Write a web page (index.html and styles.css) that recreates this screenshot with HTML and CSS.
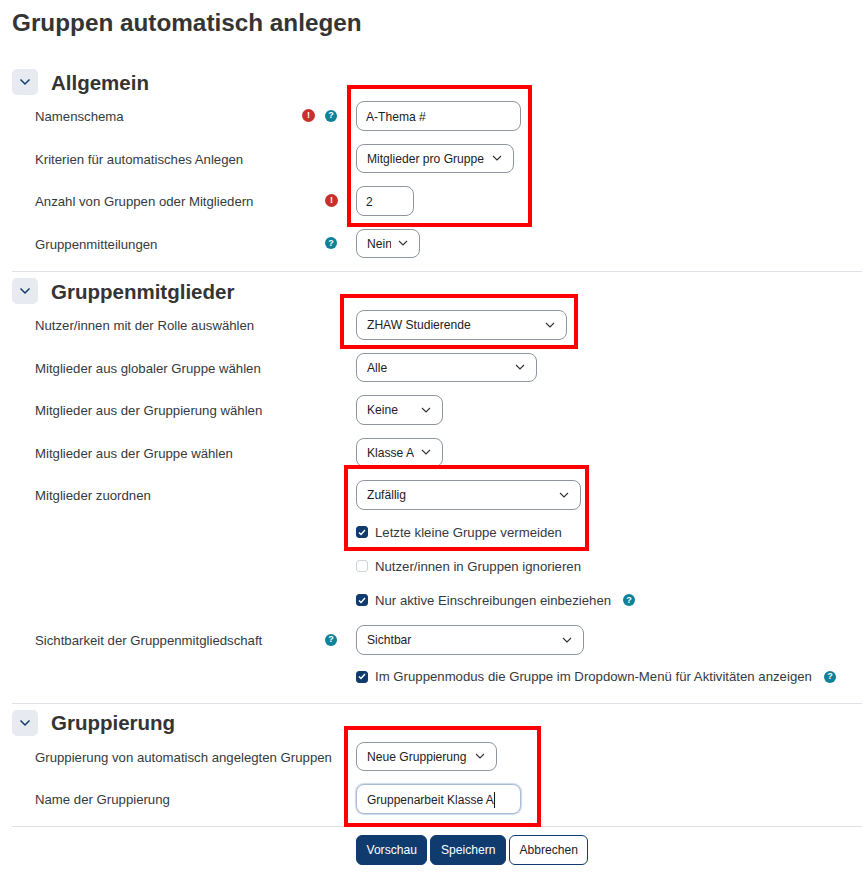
FILE: index.html
```html
<!DOCTYPE html>
<html lang="de">
<head>
    <meta charset="UTF-8">
    <title>Gruppen automatisch anlegen</title>
    <link rel="stylesheet" href="styles.css">
</head>
<body>
    <div id="page">
        <h1>Gruppen automatisch anlegen</h1>
        <form action="" method="post">

            <!-- Allgemein -->
            <section class="group first">
                <div class="group-head">
                    <span class="toggle"><svg width="12" height="8" viewBox="0 0 12 8"><path d="M1.5 1.5 6 6l4.500-4.500"/></svg></span>
                    <h2>Allgemein</h2>
                </div>
                <div class="row">
                    <div class="cell">
                        <label>Namenschema</label>
                        <span class="icon err">!</span>
                        <span class="icon help">?</span>
                    </div>
                    <input type="text" class="w-165" value="A-Thema #">
                </div>
                <div class="row">
                    <div class="cell"><label>Kriterien für automatisches Anlegen</label></div>
                    <select class="w-158"><option>Mitglieder pro Gruppe</option></select>
                </div>
                <div class="row">
                    <div class="cell">
                        <label>Anzahl von Gruppen oder Mitgliedern</label>
                        <span class="icon err solo">!</span>
                    </div>
                    <input type="text" class="w-58" value="2">
                </div>
                <div class="row">
                    <div class="cell">
                        <label>Gruppenmitteilungen</label>
                        <span class="icon help">?</span>
                    </div>
                    <select class="w-64"><option>Nein</option></select>
                </div>
            </section>

            <!-- Gruppenmitglieder -->
            <section class="group">
                <div class="group-head">
                    <span class="toggle"><svg width="12" height="8" viewBox="0 0 12 8"><path d="M1.5 1.5 6 6l4.500-4.500"/></svg></span>
                    <h2>Gruppenmitglieder</h2>
                </div>
                <div class="row">
                    <div class="cell"><label>Nutzer/innen mit der Rolle auswählen</label></div>
                    <select class="w-211"><option>ZHAW Studierende</option></select>
                </div>
                <div class="row">
                    <div class="cell"><label>Mitglieder aus globaler Gruppe wählen</label></div>
                    <select class="w-181"><option>Alle</option></select>
                </div>
                <div class="row">
                    <div class="cell"><label>Mitglieder aus der Gruppierung wählen</label></div>
                    <select class="w-87"><option>Keine</option></select>
                </div>
                <div class="row">
                    <div class="cell"><label>Mitglieder aus der Gruppe wählen</label></div>
                    <select class="w-87"><option>Klasse A</option></select>
                </div>
                <div class="row after-select">
                    <div class="cell"><label>Mitglieder zuordnen</label></div>
                    <select class="w-225"><option>Zufällig</option></select>
                </div>
                <div class="check-row">
                    <span class="box on"><svg width="8" height="7" viewBox="0 0 8 7"><path d="M1 3.500 3 5.500 7 1"/></svg></span>
                    <span>Letzte kleine Gruppe vermeiden</span>
                </div>
                <div class="check-row">
                    <span class="box"></span>
                    <span>Nutzer/innen in Gruppen ignorieren</span>
                </div>
                <div class="check-row">
                    <span class="box on"><svg width="8" height="7" viewBox="0 0 8 7"><path d="M1 3.500 3 5.500 7 1"/></svg></span>
                    <span>Nur aktive Einschreibungen einbeziehen</span>
                    <span class="icon help after">?</span>
                </div>
                <div class="row">
                    <div class="cell">
                        <label>Sichtbarkeit der Gruppenmitgliedschaft</label>
                        <span class="icon help">?</span>
                    </div>
                    <select class="w-228"><option>Sichtbar</option></select>
                </div>
                <div class="check-row tail">
                    <span class="box on"><svg width="8" height="7" viewBox="0 0 8 7"><path d="M1 3.500 3 5.500 7 1"/></svg></span>
                    <span>Im Gruppenmodus die Gruppe im Dropdown-Menü für Aktivitäten anzeigen</span>
                    <span class="icon help after">?</span>
                </div>
            </section>

            <!-- Gruppierung -->
            <section class="group">
                <div class="group-head">
                    <span class="toggle"><svg width="12" height="8" viewBox="0 0 12 8"><path d="M1.5 1.5 6 6l4.500-4.500"/></svg></span>
                    <h2>Gruppierung</h2>
                </div>
                <div class="row">
                    <div class="cell"><label>Gruppierung von automatisch angelegten Gruppen</label></div>
                    <select class="w-141"><option>Neue Gruppierung</option></select>
                </div>
                <div class="row last">
                    <div class="cell"><label>Name der Gruppierung</label></div>
                    <div class="focus-input">Gruppenarbeit Klasse A<span class="caret"></span></div>
                </div>
            </section>

            <div class="buttons">
                <button type="button" class="btn primary">Vorschau</button>
                <button type="button" class="btn primary">Speichern</button>
                <button type="button" class="btn">Abbrechen</button>
            </div>
        </form>

        <!-- rote Markierungen liegen über dem Formular -->
        <div class="mark m1"></div>
        <div class="mark m2"></div>
        <div class="mark m3"></div>
        <div class="mark m4"></div>
    </div>
</body>
</html>
```

FILE: styles.css
```css
html, body {
    margin: 0;
    padding: 0;
    background: #fff;
}
#page {
    position: relative;
    width: 862px;
    height: 874px;
    overflow: hidden;
    box-sizing: border-box;
    padding-left: 12px;
    font-family: "Liberation Sans", Arial, sans-serif;
    font-size: 13.200px;
    color: #343a40;
}
h1 {
    margin: 0;
    height: 61px;
    padding-top: 9px;
    box-sizing: border-box;
    font-size: 24.300px;
    line-height: 28px;
    font-weight: bold;
    color: #343434;
}
h2 {
    margin: 1.500px 0 0 13px;
    font-size: 20.500px;
    line-height: 26px;
    font-weight: bold;
    color: #343434;
}
.group {
    width: 850px;
    box-sizing: border-box;
    border-top: 1px solid #dee2e6;
    padding-top: 6px;
}
.group.first {
    border-top: none;
    padding-top: 8px;
}
.group-head {
    display: flex;
    align-items: center;
    height: 26px;
    margin-bottom: 6px;
}
.toggle {
    display: flex;
    align-items: center;
    justify-content: center;
    width: 26px;
    height: 26px;
    border-radius: 5px;
    background: #e7ebf1;
}
.toggle path {
    fill: none;
    stroke: #0f3b6f;
    stroke-width: 1.500;
}

/* Zeile: Beschriftung links, Feld ab x=356 */
.row {
    display: flex;
    align-items: stretch;
    height: 29.500px;
    margin-bottom: 13px;
    padding-left: 23px;
}
.row.last {
    margin-bottom: 12px;
}
.row.after-select {
    margin-bottom: 13.500px;
}
.cell {
    display: flex;
    align-items: center;
    flex: none;
    width: 321px;
}
.cell label {
    margin-right: auto;
    padding-top: 1.500px;
    white-space: nowrap;
}

/* Felder */
input[type=text], select, .focus-input {
    box-sizing: border-box;
    margin: 0;
    font-family: inherit;
    font-size: 12.100px;
    color: #1d2125;
    background-color: #fff;
    border: 1px solid #8f959e;
    border-radius: 8px;
    outline: none;
}
input[type=text] {
    padding: 2px 9px 0;
}
select {
    appearance: none;
    padding: 1px 28px 0 10px;
    background-image: url("data:image/svg+xml,%3Csvg xmlns='http://www.w3.org/2000/svg' width='10' height='6' viewBox='0 0 10 6'%3E%3Cpath d='M1 1l4 4 4-4' fill='none' stroke='%23333' stroke-width='1.100'/%3E%3C/svg%3E");
    background-repeat: no-repeat;
    background-position: right 11px center;
}
.w-58 { width: 58px; }
.w-64 { width: 64px; }
.w-87 { width: 87px; }
.w-141 { width: 141px; }
.w-158 { width: 158px; }
.w-165 { width: 165px; }
.w-181 { width: 181px; }
.w-211 { width: 211px; }
.w-225 { width: 225px; }
.w-228 { width: 228px; }

.focus-input {
    display: flex;
    align-items: center;
    width: 165px;
    padding: 2px 10px 0;
    font-size: 12px;
    border-color: #a9bdd6;
    box-shadow: 0 0 1px 1px rgba(140, 170, 205, .45);
}
.caret {
    width: 1px;
    height: 16px;
    background: #111;
}

/* Kontrollkästchen */
.check-row {
    display: flex;
    align-items: center;
    height: 18px;
    margin: -1px 0 16px 344px;
    padding-top: 1px;
}
.check-row.tail {
    margin-bottom: 17px;
}
.box {
    display: flex;
    align-items: center;
    justify-content: center;
    box-sizing: border-box;
    width: 12px;
    height: 12px;
    margin-right: 7px;
    border: 1px solid #ced4da;
    border-radius: 3px;
    background: #fff;
}
.box.on {
    background: #0f3b6f;
    border-color: #0f3b6f;
}
.box path {
    fill: none;
    stroke: #fff;
    stroke-width: 1.500;
}

/* Hinweis-Symbole */
.icon {
    display: flex;
    align-items: center;
    justify-content: center;
    flex: none;
    border-radius: 50%;
    color: #fff;
    font-weight: bold;
    font-size: 9px;
    line-height: 1;
}
.icon.err {
    width: 13px;
    height: 13px;
    margin-right: 10px;
    background: #c9302c;
}
.icon.err.solo {
    margin-right: 18px;
}
.icon.help {
    width: 12px;
    height: 12px;
    margin-right: 19px;
    background: #0e8298;
}
.icon.help.after {
    margin: 0 0 0 12px;
}

/* Schaltflächen */
.buttons {
    display: flex;
    gap: 3px;
    width: 850px;
    box-sizing: border-box;
    border-top: 1px solid #dee2e6;
    padding: 8px 0 0 344px;
}
.btn {
    height: 30px;
    padding: 0 9.500px;
    font-family: inherit;
    font-size: 12.100px;
    color: #1d2125;
    background: #fff;
    border: 1px solid #0f3b6f;
    border-radius: 6px;
}
.btn.primary {
    color: #fff;
    background: #0f3b6f;
}

/* rote Rahmen */
.mark {
    position: absolute;
    box-sizing: border-box;
    border: 4px solid #f00;
}
.m1 { left: 347px; top: 85px; width: 185px; height: 142px; }
.m2 { left: 340px; top: 294px; width: 238px; height: 55px; }
.m3 { left: 344px; top: 465px; width: 245px; height: 86px; }
.m4 { left: 344px; top: 726px; width: 197px; height: 101px; }
```
